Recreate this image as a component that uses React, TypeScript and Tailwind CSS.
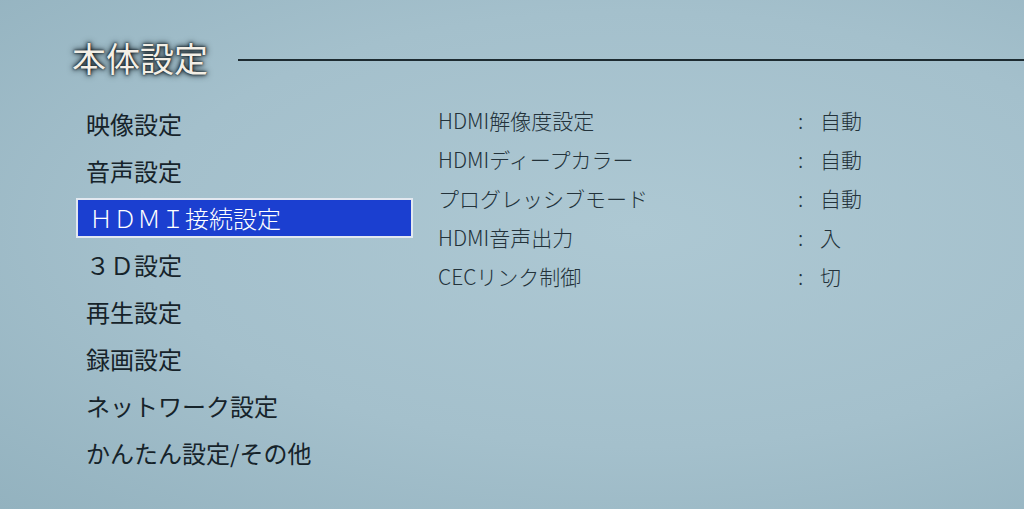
import React from 'react';

const menuItems = [
  '映像設定',
  '音声設定',
  'ＨＤＭＩ接続設定',
  '３Ｄ設定',
  '再生設定',
  '録画設定',
  'ネットワーク設定',
  'かんたん設定/その他',
];

const settings = [
  { label: 'HDMI解像度設定', value: '自動' },
  { label: 'HDMIディープカラー', value: '自動' },
  { label: 'プログレッシブモード', value: '自動' },
  { label: 'HDMI音声出力', value: '入' },
  { label: 'CECリンク制御', value: '切' },
];

const App = () => {
  const selected = 2;

  return (
    <div
      className="w-[1024px] h-[509px] overflow-hidden pt-[38px] pl-[72px] text-[#16232a] bg-[radial-gradient(ellipse_at_62%_45%,#adc8d3_0%,#a4c0cc_55%,#93b2bf_100%)]"
      style={{ fontFamily: '"Noto Sans CJK JP", "Noto Sans", sans-serif' }}
    >
      {/* Title */}
      <div className="h-[40px] flex items-center">
        <h1 className="text-[34px] leading-none text-[#f3efe6] [text-shadow:0_0_2px_#0f1a20,0_0_4px_#0f1a20,0_0_7px_#1d2b32]">
          本体設定
        </h1>
        <div className="flex-1 h-[2px] ml-[30px] mt-[4px] bg-[#1d2b31]" />
      </div>

      <div className="flex mt-[22px]">
        {/* Left menu */}
        <ul className="w-[337px] ml-[4px]">
          {menuItems.map((item, i) => (
            <li key={item} className="h-[47px] flex items-center">
              {i === selected ? (
                <div className="w-full h-[40px] flex items-center pl-[11px] bg-[#1b3fd0] border-2 border-[#e2e8f0] text-white text-[24px] font-light leading-none">
                  {item}
                </div>
              ) : (
                <span className="pl-[10px] text-[24px] leading-none">{item}</span>
              )}
            </li>
          ))}
        </ul>

        {/* Right detail list */}
        <ul className="ml-[25px] mt-[1px] font-light text-[#23323a]">
          {settings.map((s) => (
            <li key={s.label} className="h-[39px] flex items-center text-[21px] leading-none">
              <span className="w-[360px]">{s.label}</span>
              <span className="w-[22px]">:</span>
              <span>{s.value}</span>
            </li>
          ))}
        </ul>
      </div>
    </div>
  );
};

export default App;
